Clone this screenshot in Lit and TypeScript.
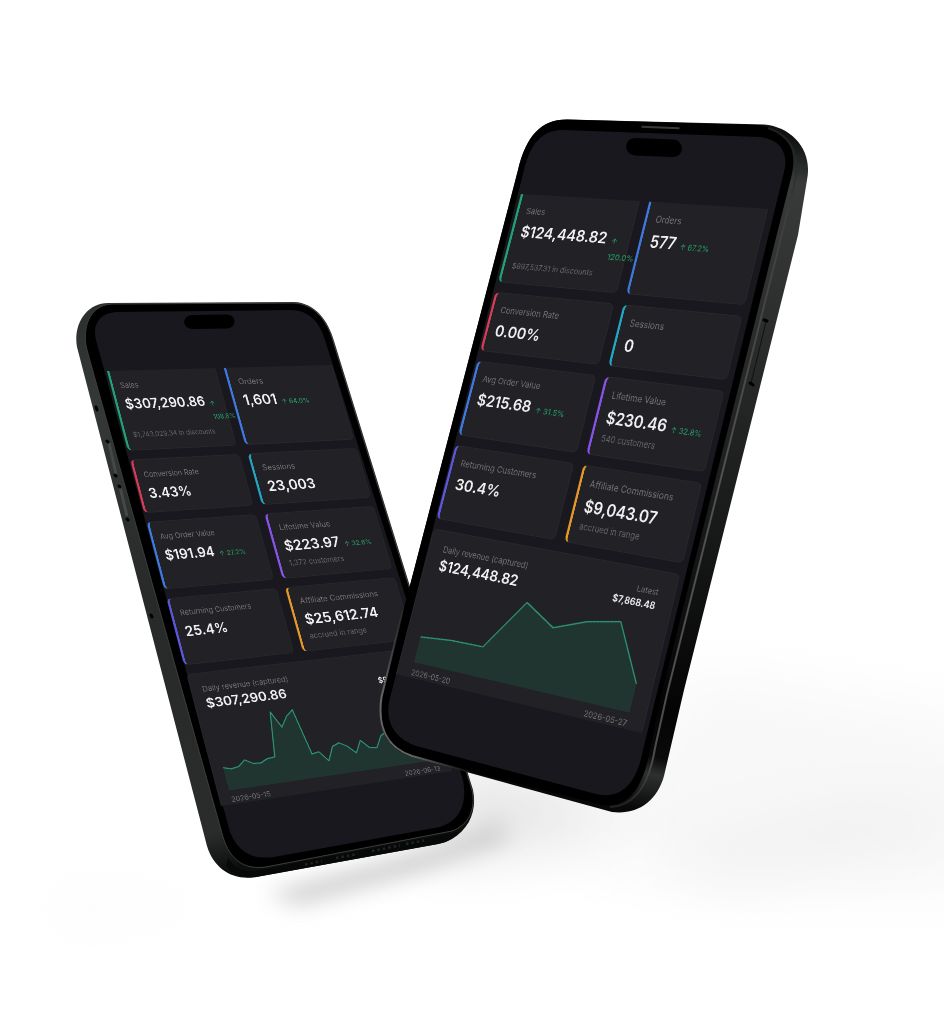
import { LitElement, html, svg, css } from "lit";
import { customElement, property, query, state } from "lit/decorators.js";
import { styleMap } from "lit/directives/style-map.js";

type Point = [number, number];

interface Metric {
  label: string;
  value: string;
  tone: string;
  delta?: string;
  note?: string;
}

interface Report {
  metrics: Metric[];
  total: string;
  latest: string;
  from: string;
  to: string;
  /** Side padding of the revenue card. */
  inset: number;
  /** Position along the plot (0 to 1) and height in plot units. */
  series: Point[];
}

const STAGE_WIDTH = 944;
const PLOT_WIDTH = 376;
const PLOT_HEIGHT = 126;

/** matrix3d() that puts a width x height box onto four corners (clockwise from top left). */
function projectOnto(corners: Point[], width: number, height: number): string {
  const [[x0, y0], [x1, y1], [x2, y2], [x3, y3]] = corners;
  const sx = x0 - x1 + x2 - x3;
  const sy = y0 - y1 + y2 - y3;
  const dx1 = x1 - x2;
  const dx2 = x3 - x2;
  const dy1 = y1 - y2;
  const dy2 = y3 - y2;
  const den = dx1 * dy2 - dx2 * dy1;
  const g = (sx * dy2 - dx2 * sy) / den;
  const h = (dx1 * sy - sx * dy1) / den;
  const a = (x1 - x0 + g * x1) / width;
  const b = (x3 - x0 + h * x3) / height;
  const d = (y1 - y0 + g * y1) / width;
  const e = (y3 - y0 + h * y3) / height;
  return `matrix3d(${a},${d},0,${g / width},${b},${e},0,${h / height},0,0,1,0,${x0},${y0},0,1)`;
}

/** Point of the quad at the fractions u (across) and v (down). */
function pointIn([p0, p1, p2, p3]: Point[], u: number, v: number): Point {
  const mix = (axis: 0 | 1) =>
    (1 - v) * ((1 - u) * p0[axis] + u * p1[axis]) + v * ((1 - u) * p3[axis] + u * p2[axis]);
  return [mix(0), mix(1)];
}

const evenly = (heights: number[]): Point[] =>
  heights.map((h, i) => [i / (heights.length - 1), h]);

const monthly: Report = {
  metrics: [
    { label: "Sales", value: "$307,290.86", delta: "108.6%", note: "$1,743,029.34 in discounts", tone: "green" },
    { label: "Orders", value: "1,601", delta: "64.0%", tone: "blue" },
    { label: "Conversion Rate", value: "3.43%", tone: "red" },
    { label: "Sessions", value: "23,003", tone: "cyan" },
    { label: "Avg Order Value", value: "$191.94", delta: "27.2%", tone: "blue" },
    { label: "Lifetime Value", value: "$223.97", delta: "32.6%", note: "1,372 customers", tone: "violet" },
    { label: "Returning Customers", value: "25.4%", tone: "indigo" },
    { label: "Affiliate Commissions", value: "$25,612.74", note: "accrued in range", tone: "amber" },
  ],
  total: "$307,290.86",
  latest: "$9,214.05",
  from: "2026-05-15",
  to: "2026-06-13",
  inset: 19,
  series: evenly([
    40, 36, 38, 48, 40, 39, 45, 46, 125, 96, 114, 124, 42, 44, 26, 50, 55, 47, 33, 54, 39, 37, 57,
    64, 51, 55, 43, 47, 38, 32,
  ]),
};

const weekly: Report = {
  metrics: [
    { label: "Sales", value: "$124,448.82", delta: "120.0%", note: "$897,537.31 in discounts", tone: "green" },
    { label: "Orders", value: "577", delta: "67.2%", tone: "blue" },
    { label: "Conversion Rate", value: "0.00%", tone: "red" },
    { label: "Sessions", value: "0", tone: "cyan" },
    { label: "Avg Order Value", value: "$215.68", delta: "31.5%", tone: "blue" },
    { label: "Lifetime Value", value: "$230.46", delta: "32.8%", note: "540 customers", tone: "violet" },
    { label: "Returning Customers", value: "30.4%", tone: "indigo" },
    { label: "Affiliate Commissions", value: "$9,043.07", note: "accrued in range", tone: "amber" },
  ],
  total: "$124,448.82",
  latest: "$7,868.48",
  from: "2026-05-20",
  to: "2026-05-27",
  inset: 25,
  series: [
    [0, 40], [0.15, 45], [0.3, 46], [0.448, 125], [0.59, 96], [0.73, 115], [0.873, 125], [1, 42],
  ],
};

@customElement("metric-card")
class MetricCard extends LitElement {
  @property({ attribute: false }) metric!: Metric;

  static styles = css`
    :host {
      display: block;
      min-width: 0;
    }
    .card {
      box-sizing: border-box;
      height: 100%;
      padding: 16px 16px 16px 13px;
      border: 1px solid #2a292e;
      border-left: 4px solid var(--tone);
      border-radius: 8px;
      background: #222126;
    }
    :host([cut]) .card {
      border-top: 0;
      border-top-left-radius: 0;
      border-top-right-radius: 0;
    }
    .green { --tone: #21a274; }
    .blue { --tone: #3f78de; }
    .red { --tone: #d63c57; }
    .cyan { --tone: #22a6c2; }
    .violet { --tone: #8654e6; }
    .indigo { --tone: #5c57d8; }
    .amber { --tone: #e5982a; }
    .label {
      margin: 0 0 8px;
      font-size: 13px;
      font-weight: 400;
      line-height: 20px;
      color: #737277;
      white-space: nowrap;
    }
    .figures {
      display: flex;
      align-items: baseline;
      gap: 8px;
      margin: 0;
    }
    .value {
      font-size: 24px;
      font-weight: 600;
      line-height: 32px;
      color: #f1f1f2;
    }
    .delta {
      width: min-content;
      font-size: 12px;
      font-weight: 500;
      line-height: 24px;
      color: #26935f;
    }
    .inline {
      white-space: nowrap;
    }
    .note {
      margin: 4px 0 0;
      font-size: 12px;
      line-height: 20px;
      color: #67666b;
      white-space: nowrap;
    }
    :host([near]) .card {
      padding-left: 15px;
    }
    :host([near]) .label {
      font-size: 14px;
    }
    :host([near]) .value {
      font-size: 25px;
    }
    :host([near]) .note {
      font-size: 13px;
    }
  `;

  render() {
    const { label, value, delta, note, tone } = this.metric;
    const long = value.length > 10;
    return html`
      <article class="card ${tone}">
        <h3 class="label">${label}</h3>
        <p class="figures">
          <span class="value">${value}</span>
          ${delta ? html`<span class="delta ${long ? "" : "inline"}">↑ ${delta}</span>` : null}
        </p>
        ${note ? html`<p class="note">${note}</p>` : null}
      </article>
    `;
  }
}

@customElement("revenue-card")
class RevenueCard extends LitElement {
  @property({ attribute: false }) report!: Report;

  static styles = css`
    :host {
      display: block;
    }
    .card {
      padding-top: 18px;
      border: 1px solid #2a292e;
      border-bottom: 0;
      border-radius: 8px 8px 0 0;
      background: #222126;
    }
    .head {
      display: flex;
      justify-content: space-between;
      align-items: flex-start;
      margin-bottom: 14px;
    }
    .label {
      margin: 0 0 2px;
      font-size: 13px;
      font-weight: 400;
      line-height: 20px;
      color: #737277;
    }
    .total {
      margin: 0;
      font-size: 23px;
      font-weight: 600;
      line-height: 28px;
      color: #f1f1f2;
    }
    .latest {
      padding-top: 3px;
      text-align: right;
    }
    .latest .label {
      margin: 0;
      font-size: 12px;
    }
    .recent {
      margin: 0;
      font-size: 14px;
      font-weight: 600;
      line-height: 20px;
      color: #f1f1f2;
    }
    .plot {
      display: block;
      width: 100%;
      height: 126px;
      overflow: visible;
    }
    .area {
      fill: #203430;
    }
    .line {
      fill: none;
      stroke: #2b9672;
      stroke-width: 2;
      stroke-linejoin: round;
    }
    .axis {
      display: flex;
      justify-content: space-between;
      padding-top: 8px;
      font-size: 12px;
      line-height: 16px;
      color: #737277;
    }
  `;

  render() {
    const { total, latest, from, to, series, inset } = this.report;
    const line = series.map(([t, h]) => `${t * PLOT_WIDTH},${PLOT_HEIGHT - h}`).join(" ");
    return html`
      <article class="card" style=${styleMap({ paddingInline: `${inset}px` })}>
        <header class="head">
          <div>
            <h3 class="label">Daily revenue (captured)</h3>
            <p class="total">${total}</p>
          </div>
          <div class="latest">
            <p class="label">Latest</p>
            <p class="recent">${latest}</p>
          </div>
        </header>
        <svg
          class="plot"
          viewBox="0 0 ${PLOT_WIDTH} ${PLOT_HEIGHT}"
          preserveAspectRatio="none"
          role="img"
          aria-label="Daily revenue"
        >
          <polygon class="area" points="0,${PLOT_HEIGHT} ${line} ${PLOT_WIDTH},${PLOT_HEIGHT}" />
          <polyline class="line" points=${line} />
        </svg>
        <div class="axis"><span>${from}</span><span>${to}</span></div>
      </article>
    `;
  }
}

/** A report laid out flat, whose cards are then tilted onto the surface given by four corners. */
@customElement("sales-panel")
class SalesPanel extends LitElement {
  @property({ attribute: false }) report!: Report;
  @property({ attribute: false }) corners!: Point[];
  @query(".sheet") private sheet!: HTMLElement;

  private observer = new ResizeObserver(() => this.tilt());

  static styles = css`
    :host {
      display: block;
      font-family: Inter, "Liberation Sans", sans-serif;
    }
    .sheet {
      position: relative;
      width: 420px;
      display: grid;
      grid-template-columns: 1fr 1fr;
      gap: 16px;
    }
    .sheet > * {
      transform-origin: 0 0;
    }
    .wide {
      grid-column: 1 / -1;
    }
  `;

  firstUpdated() {
    this.observer.observe(this.sheet);
  }

  updated() {
    this.tilt();
  }

  private tilt() {
    const { offsetWidth: width, offsetHeight: height } = this.sheet;
    if (!height) return;
    for (const card of Array.from(this.sheet.children) as HTMLElement[]) {
      const { offsetLeft: x, offsetTop: y, offsetWidth: w, offsetHeight: h } = card;
      const at = (px: number, py: number): Point => {
        const [cx, cy] = pointIn(this.corners, px / width, py / height);
        return [cx - x, cy - y];
      };
      card.style.transform = projectOnto([at(x, y), at(x + w, y), at(x + w, y + h), at(x, y + h)], w, h);
    }
  }

  render() {
    return html`
      <section class="sheet">
        ${this.report.metrics.map(
          (m, i) => html`<metric-card .metric=${m} ?cut=${i < 2} ?near=${i % 2 === 1}></metric-card>`,
        )}
        <revenue-card class="wide" .report=${this.report}></revenue-card>
      </section>
    `;
  }
}

const floor = svg`
  <defs>
    <filter id="soft" x="-50%" y="-50%" width="200%" height="200%"><feGaussianBlur stdDeviation="30" /></filter>
    <filter id="tight" x="-50%" y="-80%" width="200%" height="260%"><feGaussianBlur stdDeviation="11" /></filter>
  </defs>
  <path d="M700 670 L990 720 L990 890 L720 890 L540 850 Z" fill="#f8f8f8" filter="url(#soft)" />
  <path d="M660 850 L860 800 L960 810 L940 840 L720 875 Z" fill="#f0f0f0" filter="url(#soft)" />
  <path d="M450 770 L620 800 L560 840 L430 860 Z" fill="#e2e2e2" filter="url(#soft)" />
  <path d="M40 890 L260 900 L60 930 Z" fill="#fbfbfb" filter="url(#soft)" />
  <path d="M266 894 L440 846 L500 822 L510 838 L420 872 L300 904 Z" fill="#cbcbcb" filter="url(#tight)" />
`;

const backPhone = svg`
  <defs>
    <linearGradient id="back-side" gradientUnits="userSpaceOnUse" x1="80" y1="320" x2="230" y2="870">
      <stop offset="0" stop-color="#2c302e" /><stop offset="0.15" stop-color="#343836" />
      <stop offset="0.5" stop-color="#272a29" /><stop offset="0.93" stop-color="#2a2c2b" />
      <stop offset="1" stop-color="#0c0d0d" />
    </linearGradient>
  </defs>
  <path d="M108 303 L294 302 C315 303 328 320 334 341 L473 790 C477 810 470 828 452 839 C448 841 444 843 438 844 L256 877 C233 881 214 869 207 846 L77 347 C73 325 86 303 108 303 Z" fill="url(#back-side)" />
  <path d="M228 858 C236 871 248 873 262 870 L458 832 C452 840 446 842 438 844 L256 877 C242 879 232 873 226 866 Z" fill="#070808" />
  <path d="M112 304 L294 303 C314 304 327 320 333 341 L472 790 C476 809 469 825 452 831 L266 867 C244 870 230 860 223 837 L87 350 C82 330 88 305 112 304 Z" fill="#000" stroke="#3c3e3d" stroke-width="1" />
  <path d="M116 312 L290 310 C310 310 320 323 325 340 L463 780 C467 801 462 820 440 827 L274 857 C252 860 238 852 230 832 L96 340 C92 324 100 313 116 312 Z" fill="#19181e" />
  <path d="M192 315 L226 314.500 C237 314.500 237 328 227 328.500 L193 329 C182 329 181 316 192 315 Z" fill="#000" />
  <path d="M305 864.500 L322 861 M336 858 L358 854 M372 851 L400 845.500 M406 844 L424 840.500" stroke="#222423" stroke-width="2.500" stroke-dasharray="2.500 3" fill="none" />
  <path d="M109 443 L116 474 M120 487 L127 516" stroke="#454846" stroke-width="3" fill="none" />
  <path d="M96 407 l1 3 M107 441 l1 1 M115 475 l1 1 M119 486 l1 1 M127 519 l1 1 M151 615 l1 2" stroke="#000" stroke-width="3" stroke-linecap="round" fill="none" />
`;

const frontPhone = svg`
  <defs>
    <linearGradient id="front-side" gradientUnits="userSpaceOnUse" x1="800" y1="140" x2="640" y2="810">
      <stop offset="0" stop-color="#101111" /><stop offset="0.06" stop-color="#393b3a" />
      <stop offset="0.3" stop-color="#2a2c2b" /><stop offset="0.6" stop-color="#161717" />
      <stop offset="0.85" stop-color="#040404" /><stop offset="0.92" stop-color="#0a0a0a" />
      <stop offset="0.945" stop-color="#2e302f" /><stop offset="1" stop-color="#080808" />
    </linearGradient>
    <linearGradient id="front-edge" gradientUnits="userSpaceOnUse" x1="790" y1="128" x2="640" y2="808">
      <stop offset="0" stop-color="#1c1d1d" /><stop offset="0.12" stop-color="#3c3e3d" />
      <stop offset="0.5" stop-color="#505251" /><stop offset="0.93" stop-color="#4b4d4c" />
      <stop offset="1" stop-color="#222" />
    </linearGradient>
    <linearGradient id="front-rim" gradientUnits="userSpaceOnUse" x1="400" y1="600" x2="460" y2="780">
      <stop offset="0" stop-color="#666" stop-opacity="0" /><stop offset="0.45" stop-color="#666" />
      <stop offset="0.8" stop-color="#666" /><stop offset="1" stop-color="#666" stop-opacity="0" />
    </linearGradient>
  </defs>
  <path d="M567 119.500 L764 124.500 C793 127 813 151 807 180 L798 235 L684 690 L664 776 C657 801 638 815 612 812 L412 757 C388 749 376 729 381 697 L518 170 C526 137 540 119.500 567 119.500 Z" fill="url(#front-side)" />
  <path d="M567 119.500 L756 125 C786 127 799 148 791 178 L660 700 L650 750 C643 788 629 808 602 805 L412 757 C388 749 376 729 381 697 L518 170 C526 137 540 119.500 567 119.500 Z" fill="#000" />
  <path d="M403 610 L381.500 697 C377 728 388 748 412 756 L470 772" fill="none" stroke="url(#front-rim)" stroke-width="2" />
  <path d="M768 128 C795 137 800 160 794 186 L667 694 L655 748 C649 786 634 806 610 807" fill="none" stroke="url(#front-edge)" stroke-width="2" />
  <path d="M562 130 L760 137 C780 139 789 153 784 172 L643 750 C637 783 621 801 594 793.500 L418 746.500 C394 739 384 721 390 698 L524 170 C530 146 540 130.500 562 130 Z" fill="#19181e" />
  <path d="M636 138 L673 139.500 C685 140.500 685 157 672 157 L635 155.500 C623 154 623 138 636 138 Z" fill="#000" />
  <path d="M641.500 126.800 L679.500 128.200" stroke="#3a3a3a" stroke-width="2" />
  <path d="M766 322 L751 383" stroke="#111" stroke-width="1" />
  <path d="M764 320 l3 1 M750 383 l3 2" stroke="#000" stroke-width="3" stroke-linecap="round" />
`;

@customElement("app-root")
class AppRoot extends LitElement {
  @state() private scale = 1;

  private observer = new ResizeObserver(([entry]) => {
    this.scale = entry.contentRect.width / STAGE_WIDTH;
  });

  static styles = css`
    :host {
      display: block;
      background: #fff;
    }
    .stage {
      position: relative;
      width: 100%;
      aspect-ratio: 944 / 1016;
      overflow: hidden;
    }
    .layer {
      position: absolute;
      inset: 0;
      width: 100%;
      height: 100%;
    }
    .panel {
      position: absolute;
      top: 0;
      left: 0;
    }
  `;

  connectedCallback() {
    super.connectedCallback();
    this.observer.observe(this);
  }

  disconnectedCallback() {
    this.observer.disconnect();
    super.disconnectedCallback();
  }

  private panel(report: Report, corners: Point[]) {
    const placed = corners.map(([x, y]) => [x * this.scale, y * this.scale] as Point);
    return html`<sales-panel class="panel" .report=${report} .corners=${placed}></sales-panel>`;
  }

  render() {
    return html`
      <main class="stage">
        <svg class="layer" viewBox="0 0 944 1016" aria-hidden="true">${floor}${backPhone}</svg>
        ${this.panel(monthly, [[107, 371], [332, 365], [452, 771], [221, 806]])}
        <svg class="layer" viewBox="0 0 944 1016" aria-hidden="true">${frontPhone}</svg>
        ${this.panel(weekly, [[521, 194], [768, 209], [642, 733], [396, 674]])}
      </main>
    `;
  }
}
